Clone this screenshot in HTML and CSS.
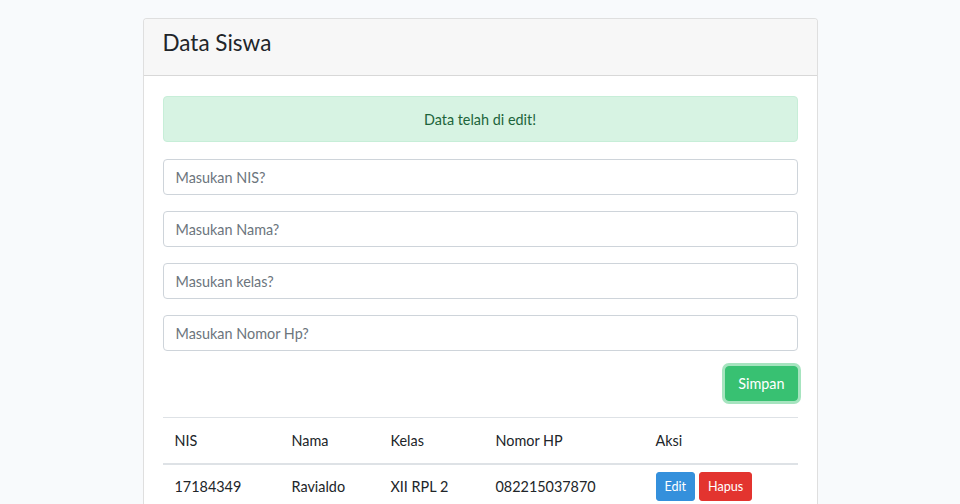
FILE: index.html
```html
<!DOCTYPE html>
<html lang="id">
<head>
<meta charset="utf-8">
<title>Data Siswa</title>
<link rel="stylesheet" href="styles.css">
</head>
<body>
<main class="page">
  <section class="card">
    <header class="card-header">
      <h3 class="card-title">Data Siswa</h3>
    </header>
    <div class="card-body">
      <div class="alert">Data telah di edit!</div>
      <form class="form">
        <input class="input" type="text" placeholder="Masukan NIS?">
        <input class="input" type="text" placeholder="Masukan Nama?">
        <input class="input" type="text" placeholder="Masukan kelas?">
        <input class="input" type="text" placeholder="Masukan Nomor Hp?">
        <div class="form-actions">
          <button type="button" class="btn btn-success">Simpan</button>
        </div>
      </form>
      <table class="table">
        <thead>
          <tr>
            <th class="c-nis">NIS</th>
            <th class="c-nama">Nama</th>
            <th class="c-kelas">Kelas</th>
            <th class="c-hp">Nomor HP</th>
            <th>Aksi</th>
          </tr>
        </thead>
        <tbody>
          <tr>
            <td>17184349</td>
            <td>Ravialdo</td>
            <td>XII RPL 2</td>
            <td>082215037870</td>
            <td class="actions"><button type="button" class="btn-sm btn-primary">Edit</button><button type="button" class="btn-sm btn-danger">Hapus</button></td>
          </tr>
        </tbody>
      </table>
    </div>
  </section>
</main>
</body>
</html>
```

FILE: styles.css
```css
* { box-sizing: border-box; }
html, body { margin: 0; }
body {
  background: #f8fafc;
  font-family: "Lato", "Noto Sans", sans-serif;
  font-size: 14.4px;
  color: #212529;
  overflow: hidden;
}
.page {
  padding-top: 18px;
  display: flex;
  justify-content: center;
}
.card {
  width: 675px;
  background: #fff;
  border: 1px solid rgba(0,0,0,.125);
  border-radius: 4px;
}
.card-header {
  height: 57px;
  background: #f7f7f7;
  border-bottom: 1px solid rgba(0,0,0,.125);
  border-radius: 3px 3px 0 0;
  padding: 0 19px 8px;
  display: flex;
  align-items: center;
}
.card-title {
  margin: 0;
  font-size: 22.5px;
  font-weight: 400;
  line-height: 1;
  color: #212529;
}
.card-body {
  padding: 20px 19px;
}
.alert {
  height: 46px;
  background: #d7f3e3;
  border: 1px solid #c7eed8;
  color: #1d643b;
  border-radius: 4px;
  display: flex;
  align-items: center;
  justify-content: center;
  margin-bottom: 17px;
}
.form {
  display: flex;
  flex-direction: column;
  gap: 16px;
}
.input {
  height: 36px;
  padding: 0 12px;
  border: 1px solid #ced4da;
  border-radius: 4px;
  font: inherit;
  color: #495057;
  background: #fff;
}
.input::placeholder { color: #6c757d; opacity: 1; }
.form-actions {
  display: flex;
  justify-content: flex-end;
  margin-top: -1px;
}
.btn {
  font: inherit;
  height: 35px;
  padding: 0 12px;
  border-radius: 4px;
  border: 1px solid transparent;
  color: #fff;
  cursor: pointer;
}
.btn-success {
  background: #38c172;
  border-color: #38c172;
  box-shadow: 0 0 0 3px rgba(77,202,128,.5);
}
.table {
  width: 100%;
  border-collapse: collapse;
  margin-top: 16px;
}
.table th, .table td {
  text-align: left;
  font-weight: 400;
  padding: 0 12px;
  border-top: 1px solid #dee2e6;
}
.table thead th {
  height: 46px;
  border-bottom: 2px solid #dee2e6;
  vertical-align: middle;
}
.table td {
  height: 44px;
  vertical-align: middle;
  border-top: none;
}
.c-nis { width: 117px; }
.c-nama { width: 99px; }
.c-kelas { width: 105px; }
.c-hp { width: 160px; }
.actions { white-space: nowrap; padding-left: 11px; }
.btn-sm {
  font: inherit;
  font-size: 12.6px;
  height: 29px;
  padding: 0 8px;
  border-radius: 3px;
  border: 1px solid transparent;
  color: #fff;
  cursor: pointer;
  vertical-align: middle;
}
.btn-sm + .btn-sm { margin-left: 4px; }
.btn-primary { background: #3490dc; border-color: #3490dc; }
.btn-danger { background: #e3342f; border-color: #e3342f; }
```
